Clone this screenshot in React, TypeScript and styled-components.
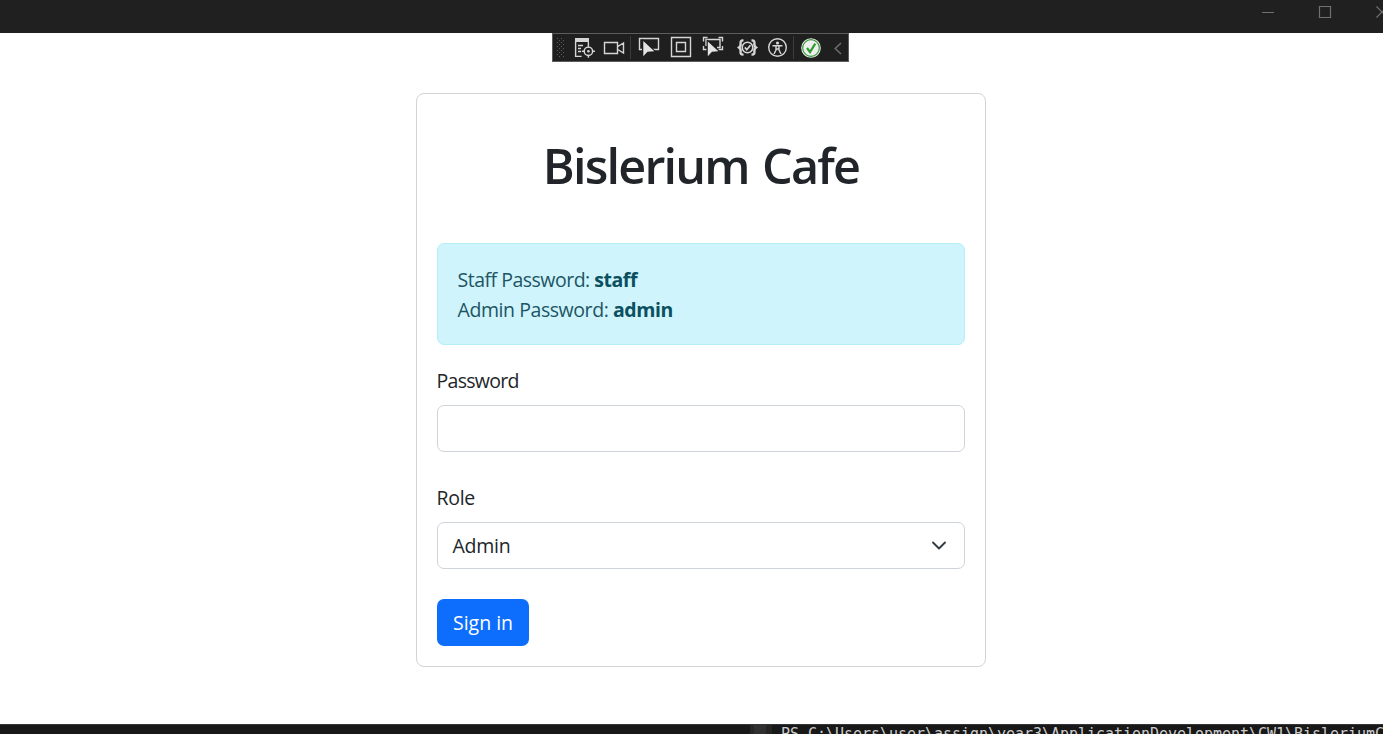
import React from "react";
import styled, { createGlobalStyle } from "styled-components";

const GlobalStyle = createGlobalStyle`
  * { box-sizing: border-box; }
  body {
    margin: 0;
    background: #fff;
    color: #212529;
    font: 400 19.5px/30px "Open Sans", "Noto Sans", sans-serif;
    overflow: hidden;
  }
`;

const Window = styled.div`
  display: flex;
  flex-direction: column;
  align-items: center;
  height: 734px;
  overflow: hidden;
`;

const TitleBar = styled.header`
  display: flex;
  justify-content: flex-end;
  width: 100%;
  height: 33px;
  flex: none;
  background: #202020;
`;

const Toolbar = styled.div`
  display: flex;
  align-self: flex-start;
  flex: none;
  width: 297px;
  height: 29px;
  margin-left: 552px;
  background: #1f1f1f;
  border: 1px solid #5c5c5c;
`;

const Glyph = styled.svg`
  display: block;
  flex: none;
  height: 27px;
  fill: none;
  stroke: #d6d6d6;
  stroke-width: 1.4;
`;

const Pointer = styled.path`
  fill: #e4e4e4;
  stroke: #1f1f1f;
  stroke-width: 2px;
  paint-order: stroke;
`;

const Divider = styled.i`
  width: 1px;
  flex: none;
  margin: 2px 0;
  background: #3d3d3d;
`;

const Card = styled.form`
  display: flex;
  flex-direction: column;
  align-items: stretch;
  flex: none;
  width: 570px;
  height: 574px;
  margin: 31px 0 57px 19px;
  padding: 20px;
  border: 1px solid #d2d3d4;
  border-radius: 8px;
`;

const Title = styled.h1`
  margin: 20px 0 47px;
  height: 62px;
  font-size: 48.5px;
  font-weight: 600;
  line-height: 62px;
  text-align: center;
  white-space: nowrap;
  letter-spacing: -1.8px;
  word-spacing: 2.4px;
`;

const Alert = styled.div`
  height: 102px;
  padding: 21px 20px 19px;
  background: #cff4fc;
  border: 1px solid #b6effb;
  border-radius: 7px;
  color: #1d5563;
  margin-bottom: 20px;
`;

const Line = styled.div<{ $spacing: number }>`
  margin-left: -0.5px;
  letter-spacing: ${(p) => p.$spacing}px;
  white-space: nowrap;
`;

const Strong = styled.strong`
  font-weight: 700;
  letter-spacing: -0.45px;
  color: #0b5060;
`;

const Label = styled.label<{ $spacing: number }>`
  height: 30px;
  margin: 0 0 10px -0.5px;
  padding-top: 1px;
  letter-spacing: ${(p) => p.$spacing}px;
`;

const fieldBox = `
  height: 47px;
  border: 1px solid #ced4da;
  border-radius: 7px;
  background: #fff;
  font: inherit;
  color: inherit;
  outline: none;
`;

const Input = styled.input`
  ${fieldBox}
  width: 100%;
  padding: 0 15px;
  margin-bottom: 30px;
`;

const Select = styled.div`
  ${fieldBox}
  display: flex;
  align-items: center;
  justify-content: space-between;
  padding: 1px 15px 0 14.5px;
  margin-bottom: 30px;
  letter-spacing: -0.25px;
`;

const Button = styled.button`
  align-self: flex-start;
  width: 92px;
  height: 47px;
  padding: 1px 0 0;
  border: 0;
  border-radius: 7px;
  background: #0d6efd;
  color: #fff;
  font: inherit;
  white-space: nowrap;
`;

const Terminal = styled.footer`
  display: flex;
  width: 100%;
  height: 10px;
  flex: none;
  overflow: hidden;
  background: #181818;
  border-top: 1px solid #343638;
`;

const EditorEdge = styled.div`
  width: 750px;
  flex: none;
`;

const ScrollTrack = styled.div`
  width: 22px;
  flex: none;
  background: linear-gradient(to right, #262626 4px, #303030 4px 16px, #242424 16px);
`;

const Prompt = styled.div`
  padding: 0 0 0 9px;
  color: #cccccc;
  font: 15px/18px "DejaVu Sans Mono", monospace;
  letter-spacing: -0.03px;
  white-space: pre;
`;

const gripDots = [4, 8, 12, 16, 20].flatMap((y) => [
  [4, y], [8, y], [6, y + 2], [10, y + 2],
]);

export default function App() {
  return (
    <>
      <GlobalStyle />
      <Window>
        <TitleBar>
          <svg width="143" height="33" fill="none" stroke="#717171" strokeWidth="1.2">
            <path d="M22 12.5h12M79.5 6.5h11v11h-11zM136.5 6.5l11 11M136.5 17.5l11-11" />
          </svg>
        </TitleBar>
        <Toolbar>
          <Glyph width="17" viewBox="0 0 17 27">
            {gripDots.map(([x, y]) => (
              <rect key={`${x}-${y}`} x={x} y={y} width="1" height="1" fill="#5e5e5e" stroke="none" />
            ))}
          </Glyph>
          <Glyph width="33" viewBox="0 0 33 27">
            <path d="M5 4h14v4H5z" fill="#d6d6d6" stroke="none" />
            <path d="M5.6 7v15.4h6M8 11.5h5M8 14.5h3M8 17.5h3M18.4 8v3" />
            <circle cx="18.4" cy="17.3" r="4.2" />
            <circle cx="18.4" cy="17.3" r="1.3" fill="#d6d6d6" stroke="none" />
            <path d="M18.4 10.8v3M18.4 20.8v3M11.9 17.3h3M21.9 17.3h3" />
          </Glyph>
          <Glyph width="27" viewBox="0 0 27 27">
            <path d="M1.5 8.5h13v11h-13zM14.8 12.5l5.7-3.6v10.2l-5.7-3.6" />
          </Glyph>
          <Divider />
          <Glyph width="36" viewBox="-3 0 36 27">
            <path d="M8 15.5H5.5v-11h19v11H18" />
            <Pointer d="M9.3 7v15.2l4.2-4.4 6.8-.6z" />
          </Glyph>
          <Glyph width="32" viewBox="0 0 32 27">
            <path d="M4.5 3.5h19v19h-19zM9.5 8.5h9v9h-9z" />
          </Glyph>
          <Glyph width="34" viewBox="0 0 34 27">
            <path d="M4.5 7.5v-4h4M19.5 3.5h4v4M23.5 12v3.5h-4M4.5 12v3.5h3M7 12V5.5h14v8h-3" />
            <Pointer d="M8.8 7.5v14.7l4.2-4.4 6.4-.6z" />
          </Glyph>
          <Glyph width="31" viewBox="0 0 31 27">
            <path d="M10.5 6.6c-2.4-.4-3.2.6-2.9 2.8.3 2-.1 3-1.6 4.1 1.5 1.1 1.9 2.1 1.6 4.1-.3 2.2.5 3.2 2.9 2.8M18.5 6.6c2.4-.4 3.2.6 2.9 2.8-.3 2 .1 3 1.6 4.1-1.5 1.1-1.9 2.1-1.6 4.1.3 2.2-.5 3.2-2.9 2.8" strokeWidth="2.4" />
            <circle cx="14.5" cy="13.5" r="5.3" strokeWidth="1.6" />
            <path d="M11.8 13.4l2 2.3 3.6-4.4" strokeWidth="1.8" />
          </Glyph>
          <Glyph width="29" viewBox="0 0 29 27">
            <circle cx="13.5" cy="13.5" r="8.8" />
            <circle cx="13.5" cy="9" r="1.6" fill="#d6d6d6" stroke="none" />
            <path d="M8.5 11.8h10M12 12v4l-2 4M15 12v4l2 4M12 15h3" />
          </Glyph>
          <Divider />
          <Glyph width="33" viewBox="-.5 0 33 27">
            <circle cx="16.5" cy="14" r="9.8" fill="#eee" stroke="none" />
            <circle cx="16.5" cy="14" r="8.3" stroke="#359b35" strokeWidth="1.2" />
            <path d="M12.5 14l3 4 5.3-8.3" stroke="#2e9b2e" strokeWidth="2.2" />
          </Glyph>
          <Glyph width="20" viewBox="-1 0 20 27">
            <path d="M13 9l-5.8 5.5 5.8 5.5" stroke="#6b6b6b" strokeWidth="1.6" />
          </Glyph>
        </Toolbar>
        <Card onSubmit={(e) => e.preventDefault()}>
          <Title>Bislerium Cafe</Title>
          <Alert>
            <Line $spacing={-0.5}>Staff Password: <Strong>staff</Strong></Line>
            <Line $spacing={-0.43}>Admin Password: <Strong>admin</Strong></Line>
          </Alert>
          <Label htmlFor="password" $spacing={-0.7}>Password</Label>
          <Input id="password" type="password" />
          <Label $spacing={-0.3}>Role</Label>
          <Select role="combobox" tabIndex={0}>
            Admin
            <svg width="20" height="20" viewBox="0 0 16 16" fill="none" stroke="#343a40" strokeWidth="1.5" strokeLinecap="round" strokeLinejoin="round">
              <path d="m3.2 5.2 4.8 4.8 4.8-4.8" />
            </svg>
          </Select>
          <Button type="submit">Sign in</Button>
        </Card>
        <Terminal>
          <EditorEdge />
          <ScrollTrack />
          <Prompt>{"PS C:\\Users\\user\\assign\\year3\\ApplicationDevelopment\\CW1\\BisleriumCafe"}</Prompt>
        </Terminal>
      </Window>
    </>
  );
}
